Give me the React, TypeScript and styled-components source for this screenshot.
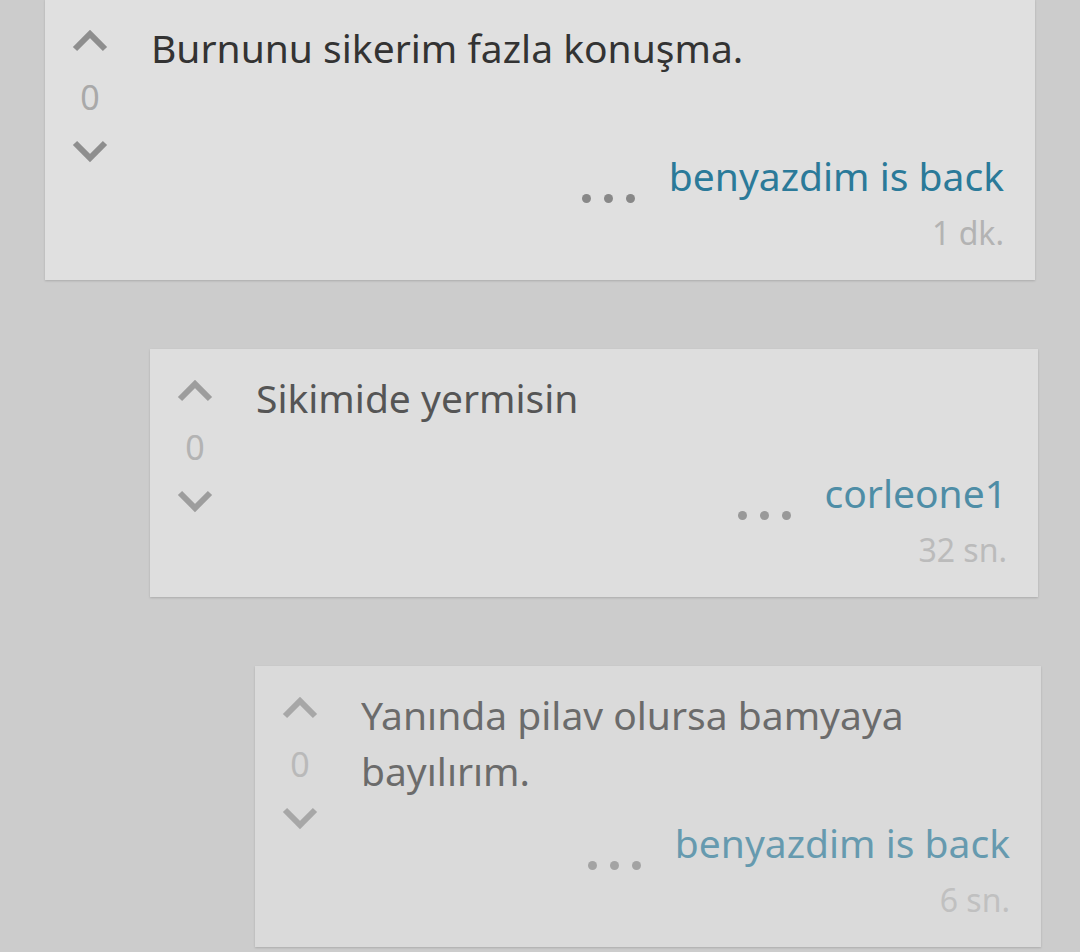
import React from "react";
import styled, { createGlobalStyle } from "styled-components";

const GlobalStyle = createGlobalStyle`
  html, body {
    margin: 0;
    padding: 0;
    background: #cccccc;
  }
  body {
    font-family: "Noto Sans", "Open Sans", sans-serif;
    -webkit-font-smoothing: antialiased;
  }
`;

type CommentData = {
  id: number;
  text: string;
  user: string;
  time: string;
  score: number;
  depth: number;
  bg: string;
  fade: number;
  bodyLines: number;
};

const comments: CommentData[] = [
  { id: 1, text: "Burnunu sikerim fazla konuşma.", user: "benyazdim is back", time: "1 dk.", score: 0, depth: 0, bg: "#e0e0e0", fade: 1, bodyLines: 2 },
  { id: 2, text: "Sikimide yermisin", user: "corleone1", time: "32 sn.", score: 0, depth: 1, bg: "#dedede", fade: 0.8, bodyLines: 1 },
  { id: 3, text: "Yanında pilav olursa bamyaya bayılırım.", user: "benyazdim is back", time: "6 sn.", score: 0, depth: 2, bg: "#dadada", fade: 0.66, bodyLines: 2 },
];

const Thread = styled.div`
  display: flex;
  flex-direction: column;
  gap: 69px;
  margin-top: -1px;
  padding-bottom: 40px;
`;

const Card = styled.article<{ $depth: number; $bg: string; $fade: number }>`
  display: flex;
  box-sizing: border-box;
  margin-left: ${(p) => 45 + p.$depth * 105}px;
  width: ${(p) => 990 - p.$depth * 102}px;
  padding: 21px 31px 24px 0;
  background: ${(p) => p.$bg};
  box-shadow: 0 1px 2px rgba(0, 0, 0, 0.16);

  & > * {
    opacity: ${(p) => p.$fade};
  }
`;

const VoteColumn = styled.div`
  width: 90px;
  flex-shrink: 0;
  display: flex;
  flex-direction: column;
  align-items: center;
  padding-top: 8px;
`;

const Chevron = styled.svg`
  display: block;
  width: 36px;
  height: 25px;
`;

const Score = styled.div`
  font-size: 34px;
  line-height: 40px;
  color: #a9a9a9;
  margin: 24px 0 22px;
`;

const Main = styled.div`
  flex: 1;
  margin-left: 16px;
  display: flex;
  flex-direction: column;
`;

const Body = styled.p<{ $lines: number }>`
  margin: 0;
  font-size: 39px;
  line-height: 56px;
  color: #333333;
  min-height: ${(p) => Math.max(79, p.$lines * 56)}px;
`;

const Footer = styled.div`
  margin-top: 20px;
  display: flex;
  flex-direction: column;
  align-items: flex-end;
`;

const AuthorRow = styled.div`
  display: flex;
  align-items: flex-end;
  gap: 34px;
`;

const Dots = styled.div`
  display: flex;
  gap: 13px;
  margin-bottom: -3px;
`;

const Dot = styled.span`
  width: 9px;
  height: 9px;
  border-radius: 50%;
  background: #888888;
`;

const Author = styled.a`
  font-size: 39px;
  line-height: 48px;
  color: #2b7a99;
  text-decoration: none;
`;

const Time = styled.div`
  margin-top: 10px;
  font-size: 32px;
  line-height: 46px;
  color: #b3b3b3;
`;

function UpIcon() {
  return (
    <Chevron viewBox="0 0 36 25">
      <polyline points="3,21 18,6 33,21" fill="none" stroke="#8e8e8e" strokeWidth="6" strokeLinejoin="miter" strokeLinecap="butt" />
    </Chevron>
  );
}

function DownIcon() {
  return (
    <Chevron viewBox="0 0 36 25">
      <polyline points="3,4 18,19 33,4" fill="none" stroke="#8e8e8e" strokeWidth="6" strokeLinejoin="miter" strokeLinecap="butt" />
    </Chevron>
  );
}

function Comment({ c }: { c: CommentData }) {
  return (
    <Card $depth={c.depth} $bg={c.bg} $fade={c.fade}>
      <VoteColumn>
        <UpIcon />
        <Score>{c.score}</Score>
        <DownIcon />
      </VoteColumn>
      <Main>
        <Body $lines={c.bodyLines}>{c.text}</Body>
        <Footer>
          <AuthorRow>
            <Dots>
              <Dot />
              <Dot />
              <Dot />
            </Dots>
            <Author href="#">{c.user}</Author>
          </AuthorRow>
          <Time>{c.time}</Time>
        </Footer>
      </Main>
    </Card>
  );
}

export default function App() {
  return (
    <>
      <GlobalStyle />
      <Thread>
        {comments.map((c) => (
          <Comment key={c.id} c={c} />
        ))}
      </Thread>
    </>
  );
}
